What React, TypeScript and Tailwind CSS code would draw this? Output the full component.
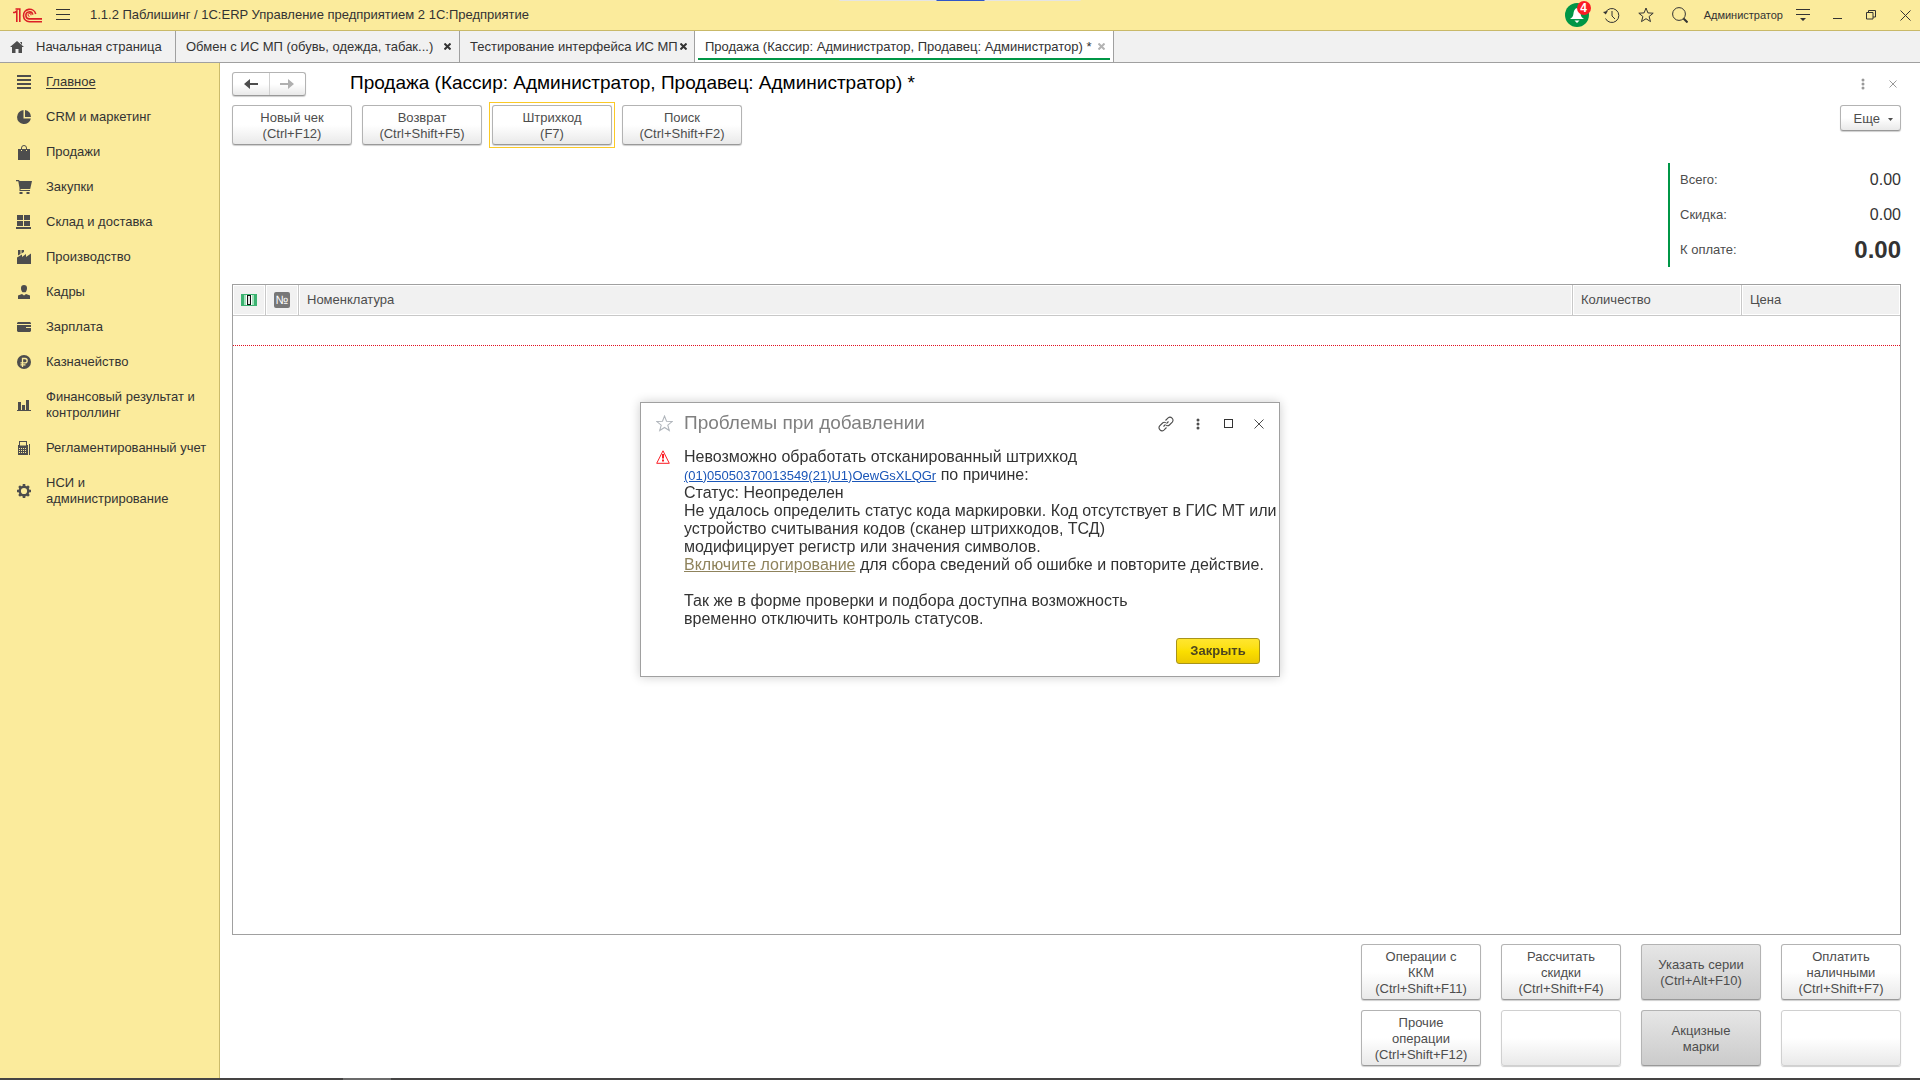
import type { ReactNode } from "react";

type MenuItem = { title: string; icon: ReactNode };

const openTabs = ["Обмен с ИС МП (обувь, одежда, табак...)", "Тестирование интерфейса ИС МП"];

const menu: MenuItem[] = [
  { title: "Главное", icon: <path d="M1 1h14v2H1zM1 5h14v2H1zM1 9h14v2H1zM1 13h14v2H1z" /> },
  {
    title: "CRM и маркетинг",
    icon: <path d="M7.5 1.1A7 7 0 1 0 14.9 9.5H7.5zM9 1v7h6A7 7 0 0 0 9 1z" />,
  },
  {
    title: "Продажи",
    icon: (
      <>
        <path d="M2 5h3v2h1V5h4v2h1V5h3v11H2z" />
        <path d="M5.5 6V4a2.5 2.5 0 0 1 5 0v2" fill="none" stroke="currentColor" />
      </>
    ),
  },
  {
    title: "Закупки",
    icon: <path d="M0 1h3l.6 1H16l-1.8 8H4.5v1H14v1H3.5V9L2.3 2.2H0zM3.5 13h3v2h-3zM10.5 13h3v2h-3z" />,
  },
  { title: "Склад и доставка", icon: <path d="M1 1h6v5H1zM8 1h6v5H8zM1 7h6v5H1zM8 7h6v5H8zM0 13h15v2H0z" /> },
  { title: "Производство", icon: <path d="M1 15V8.5l5-3V8l4-3v3l5-3.5V15zM2 1h2.5v4L2 6.5zM5.5 1H8v2L5.5 4.500z" /> },
  {
    title: "Кадры",
    icon: (
      <>
        <path d="M8 1a3 3 0 0 1 3 3c0 2-.7 3.5-1.5 4.3h-3C5.7 7.5 5 6 5 4a3 3 0 0 1 3-3z" />
        <path d="M2 15v-3.5L6 10l2 1.5L10 10l4 1.5V15z" />
      </>
    ),
  },
  { title: "Зарплата", icon: <path d="M2 3h12l1 1v1H1V4zM1 6h14v2h-5v1h5v3l-1 1H2l-1-1z" /> },
  {
    title: "Казначейство",
    icon: (
      <>
        <circle cx="8" cy="8" r="7" />
        <path d="M6.5 13V4.5H9a2 2 0 0 1 0 4.3H4.5M4.5 10.8h5" fill="none" stroke="#fbeb9c" strokeWidth="1.3" />
      </>
    ),
  },
  { title: "Финансовый результат и контроллинг", icon: <path d="M1 13h14v1H1zM2 5h3v8H2zM6 8h3v5H6zM10 3h3v10h-3z" /> },
  {
    title: "Регламентированный учет",
    icon: (
      <>
        <path
          fillRule="evenodd"
          d="M3 1h8v4h1v10H2V5h1zM4 2v3.5h6V2zM3 8v1h1V8zm2 0v1h1V8zm2 0v1h1V8zm2 0v1h1V8zm-6 2v1h1v-1zm2 0v1h1v-1zm2 0v1h1v-1zm2 0v1h1v-1zm-6 2v1h1v-1zm2 0v1h1v-1zm2 0v1h1v-1zm2 0v1h1v-1z"
        />
        <path d="M13 4h1v11h-1z" />
      </>
    ),
  },
  {
    title: "НСИ и администрирование",
    icon: (
      <>
        <circle cx="8" cy="8" r="4.3" fill="none" stroke="currentColor" strokeWidth="2.4" />
        <path
          d="M8 1v2.5M8 12.5V15M1 8h2.5M12.5 8H15M3.1 3.1l1.7 1.7M11.2 11.2l1.7 1.7M3.1 12.9l1.7-1.7M11.2 4.8l1.7-1.7"
          stroke="currentColor"
          strokeWidth="2.6"
        />
      </>
    ),
  },
];

const totals = [
  { label: "Всего:", value: "0.00", large: false },
  { label: "Скидка:", value: "0.00", large: false },
  { label: "К оплате:", value: "0.00", large: true },
];

const footerButtons = [
  { lines: ["Операции с", "ККМ", "(Ctrl+Shift+F11)"] },
  { lines: ["Рассчитать", "скидки", "(Ctrl+Shift+F4)"] },
  { lines: ["Указать серии", "(Ctrl+Alt+F10)"], dark: true },
  { lines: ["Оплатить", "наличными", "(Ctrl+Shift+F7)"] },
  { lines: ["Прочие", "операции", "(Ctrl+Shift+F12)"] },
  { lines: [] },
  { lines: ["Акцизные", "марки"], dark: true },
  { lines: [] },
];

const buttonBase = "rounded-[3px] border border-[#b3b3b3] border-b-[#999] text-center text-[13px] leading-4 text-[#4d4d4d] shadow-[0_1px_1px_#cfcfcf]";
const lightFill = "bg-linear-to-b from-white from-50% to-[#e9e9e9]";

function Cross({ size, width = 1 }: { size: number; width?: number }) {
  return (
    <svg width={size} height={size} viewBox={`0 0 ${size} ${size}`} stroke="currentColor" strokeWidth={width}>
      <path d={`M.5.5 ${size - 0.5} ${size - 0.5}M${size - 0.5}.5.5 ${size - 0.5}`} />
    </svg>
  );
}

function Dots() {
  return (
    <svg width="4" height="12" viewBox="0 0 4 12" fill="currentColor">
      <circle cx="2" cy="2" r="1.5" />
      <circle cx="2" cy="6" r="1.5" />
      <circle cx="2" cy="10" r="1.5" />
    </svg>
  );
}

function Star({ size }: { size: number }) {
  return (
    <svg width={size} height={size} viewBox="0 0 16 16" fill="none" stroke="currentColor">
      <path d="M8 1l1.9 4.9 5.3.3-4.1 3.3 1.4 5.1L8 11.7l-4.5 2.9 1.4-5.1L.8 6.2l5.3-.3z" />
    </svg>
  );
}

function TitleBar() {
  return (
    <header className="relative flex h-[31px] shrink-0 items-center border-b border-[#c9b968] bg-[#fbeb9c] pr-[9px] pl-[13px] text-[#333]">
      <div className="absolute top-0 left-1/2 flex h-px w-[241px] -translate-x-1/2 justify-center bg-[#e4e4e4]">
        <span className="h-px w-12 bg-[#2f56c8]" />
      </div>
      <svg width="30" height="15" viewBox="0 0 30 15" fill="none" stroke="#dc1f26" strokeWidth="1.6" aria-label="1С">
        <path d="M0 4.5h1.8L3.8 3v11M2.5 1h4.3v13" />
        <path d="M22.7 6A6.2 6.2 0 1 0 16.5 13.7H29M19.8 6.6A3.5 3.5 0 1 0 16.5 10.9H29" />
        <path d="M18 7.3a1.5 1.5 0 1 0-1.5 1.1" strokeWidth="1" />
      </svg>
      <button type="button" aria-label="Меню" className="ml-[13px]">
        <svg width="14" height="12" viewBox="0 0 14 12" fill="#333">
          <path d="M0 0h14v1H0zM0 5h14v1H0zM0 10h14v1H0z" />
        </svg>
      </button>
      <span className="ml-5 text-[13px]">1.1.2 Паблишинг / 1C:ERP Управление предприятием 2 1С:Предприятие</span>
      <div className="ml-auto flex items-center">
        <button type="button" aria-label="Уведомления" className="relative mr-3">
          <svg width="26" height="30" viewBox="0 0 26 30">
            <circle cx="12" cy="15" r="12" fill="#009646" />
            <path d="M12 8c2.5.8 3.3 3 3.6 6 .3 2.5 1.4 3.7 3.4 5H5c2-1.3 3.1-2.5 3.4-5 .3-3 1.1-5.2 3.6-6zM9.5 20.5h5L12 23z" fill="#fff" />
            <circle cx="19" cy="8" r="7" fill="#fb1c24" />
          </svg>
          <span className="absolute top-0 left-3 w-[14px] text-center text-[12px] leading-4 font-bold text-white">4</span>
        </button>
        <button type="button" aria-label="История" className="mr-[18px]">
          <svg width="17" height="17" viewBox="0 0 17 17" fill="none" stroke="currentColor">
            <path d="M2.5 5.5a7 7 0 1 1 0 6M9 4v5l3 3" />
            <path d="M0 5l2.8 2.5L4.8 4z" fill="currentColor" stroke="none" />
          </svg>
        </button>
        <button type="button" aria-label="Избранное" className="mr-[18px]">
          <Star size={16} />
        </button>
        <button type="button" aria-label="Поиск" className="mr-4">
          <svg width="16" height="16" viewBox="0 0 16 16" fill="none" stroke="currentColor">
            <circle cx="7" cy="7" r="6.4" />
            <path d="M11.5 11.5l4 4" strokeWidth="2" />
          </svg>
        </button>
        <button type="button" className="mr-[13px] text-[11px]">Администратор</button>
        <button type="button" aria-label="Настройки" className="mr-[23px]">
          <svg width="14" height="14" viewBox="0 0 14 14" fill="currentColor">
            <path d="M0 1h14v1H0zM0 6h14v1H0zM4 10h6l-3 3z" />
          </svg>
        </button>
        <button type="button" aria-label="Свернуть" className="mr-6 h-2 w-[9px] border-b border-[#333]" />
        <button type="button" aria-label="Восстановить" className="mr-6">
          <svg width="10" height="10" viewBox="0 0 10 10" fill="none" stroke="currentColor">
            <path d="M.5 2.5h6.5v6.5H.5zM2.5 2.5v-2h7v6.500H7" />
          </svg>
        </button>
        <button type="button" aria-label="Закрыть окно">
          <Cross size={11} />
        </button>
      </div>
    </header>
  );
}

function TabBar() {
  return (
    <nav className="flex h-8 shrink-0 border-b border-[#a0a0a0] bg-[#f1f1f1] text-[13px] text-[#333]">
      <a href="#home" className="flex w-44 items-center gap-3 border-r border-[#a0a0a0] pl-[10px] whitespace-nowrap">
        <svg width="14" height="12" viewBox="0 0 14 12" fill="#4d4d4d">
          <path d="M7 0l7 6h-2v6H8.500V8h-3v4H2V6H0zM10 1h2v3z" />
        </svg>
        Начальная страница
      </a>
      {openTabs.map((tab) => (
        <div
          key={tab}
          className="flex items-center justify-between gap-0.5 border-r border-[#a0a0a0] pr-2 pl-[10px] whitespace-nowrap first-of-type:w-[284px] last-of-type:w-[235px]"
        >
          <a href="#tab">{tab}</a>
          <button type="button" aria-label="Закрыть вкладку">
            <Cross size={7} width={2} />
          </button>
        </div>
      ))}
      <section className="flex w-[419px] flex-col border-r border-[#a0a0a0] bg-white px-[3px] pb-0.5 whitespace-nowrap">
        <div className="flex flex-1 items-center justify-between border-b-2 border-[#009646] pt-1 pr-[5px] pl-[7px]">
          <a href="#sale">Продажа (Кассир: Администратор, Продавец: Администратор) *</a>
          <button type="button" aria-label="Закрыть вкладку" className="text-[#b3b3b3]">
            <Cross size={7} width={2} />
          </button>
        </div>
      </section>
    </nav>
  );
}

function Sidebar() {
  return (
    <aside className="w-[220px] shrink-0 border-r border-[#cbbb6b] bg-[#fbeb9c] pt-0.5 text-[13px] leading-4 text-[#333]">
      {menu.map((item, index) => (
        <a key={item.title} href="#section" className="flex items-center gap-[14px] pt-[9px] pr-2 pb-[10px] pl-4">
          <svg width="16" height="16" viewBox="0 0 16 16" fill="currentColor" className="shrink-0 text-[#4d4d4d]">
            {item.icon}
          </svg>
          <span className={index === 0 ? "underline underline-offset-2" : ""}>{item.title}</span>
        </a>
      ))}
    </aside>
  );
}

function CommandButton({ title, keys }: { title: string; keys: string }) {
  return (
    <button type="button" className={`h-10 w-[120px] pt-0.5 ${buttonBase} ${lightFill}`}>
      {title}
      <br />
      {keys}
    </button>
  );
}

function ItemsTable() {
  const cell = "border-r border-b border-[#c8c8c8] font-normal shadow-[inset_0_0_0_1px_#fff] last:border-r-0";
  return (
    <div className="flex-1 border border-[#a0a0a0]">
      <table className="w-full table-fixed border-separate border-spacing-0 text-left text-[13px] text-[#4d4d4d]">
        <thead>
          <tr className="h-[31px] bg-[#f1f1f1]">
            <th className={`w-[33px] ${cell}`}>
              <svg width="16" height="12" viewBox="0 0 16 12" className="mx-auto">
                <path d="M0 0h16v12H0z" fill="#3cb371" />
                <path d="M3 1h10v10H3z" fill="#a6e3bf" />
                <path d="M5 1h6v10H5z" fill="#fff" />
                <path d="M6 1h4v10H6z" fill="#111" />
                <path d="M7 2l2 2-2 2 2 2-2 2M9 2L7 4l2 2-2 2 2 2" fill="none" stroke="#fff" strokeWidth=".9" />
              </svg>
            </th>
            <th className={`w-[33px] ${cell}`}>
              <span className="mx-auto block size-4 rounded-xs bg-[#777] text-center text-[12px] leading-4 text-white">№</span>
            </th>
            <th className={`pl-2 ${cell}`}>Номенклатура</th>
            <th className={`w-[169px] pl-2 ${cell}`}>Количество</th>
            <th className={`w-[158px] pl-2 ${cell}`}>Цена</th>
          </tr>
        </thead>
        <tbody>
          <tr className="h-[30px]">
            <td colSpan={5} className="border-b border-dotted border-[#e01020]" />
          </tr>
        </tbody>
      </table>
    </div>
  );
}

function ProblemDialog() {
  return (
    <div className="fixed inset-0 flex items-center justify-center pb-0.5">
      <div
        role="dialog"
        aria-labelledby="dialog-title"
        className="w-[640px] border border-[#a0a0a0] bg-white px-[15px] pb-3 text-[#333] shadow-[0_0_10px_rgba(0,0,0,0.2)]"
      >
        <div className="flex h-[42px] items-center">
          <span className="mr-[11px] text-[#b0b5bb]">
            <Star size={17} />
          </span>
          <h2 id="dialog-title" className="text-[19px] text-[#808080]">Проблемы при добавлении</h2>
          <div className="ml-auto flex items-center text-[#4d4d4d]">
            <button type="button" aria-label="Получить ссылку" className="mr-[22px]">
              <svg width="16" height="16" viewBox="0 0 16 16" fill="none" stroke="currentColor" strokeWidth="1.1">
                <path d="M7.5 4.5l2.6-2.6a3 3 0 0 1 4.2 4.2l-2.9 2.9c-.9.9-2.2.9-3.200.3" />
                <path d="M8.5 11.5l-2.6 2.6a3 3 0 0 1-4.2-4.2L4.600 7c.9-.9 2.2-.9 3.200-.3" />
                <path d="M5.5 10.5l2-2M8.5 7.5l2-2" />
              </svg>
            </button>
            <button type="button" aria-label="Еще" className="mr-6">
              <Dots />
            </button>
            <button type="button" aria-label="Развернуть" className="mr-[21px] size-[9px] border border-[#333]" />
            <button type="button" aria-label="Закрыть">
              <Cross size={10} />
            </button>
          </div>
        </div>
        <div className="flex gap-[14px] pt-[3px]">
          <svg width="14" height="14" viewBox="0 0 14 14" className="mt-0.5 shrink-0">
            <path d="M7 .8l6.3 12.5H.7z" fill="#fff" stroke="#fb1c24" strokeLinejoin="round" />
            <path d="M6 4h2v4.5H6zM6 9.5h2v2H6z" fill="#fb1c24" />
          </svg>
          <p className="text-[16px] leading-[18px] whitespace-nowrap">
            Невозможно обработать отсканированный штрихкод
            <br />
            <a href="#code" className="text-[13px] leading-none text-[#1a56b8] underline">(01)05050370013549(21)U1)OewGsXLQGr</a> по причине:
            <br />
            Статус: Неопределен
            <br />
            Не удалось определить статус кода маркировки. Код отсутствует в ГИС МТ или
            <br />
            устройство считывания кодов (сканер штрихкодов, ТСД)
            <br />
            модифицирует регистр или значения символов.
            <br />
            <a href="#log" className="text-[#8f835c] underline">Включите логирование</a> для сбора сведений об ошибке и повторите действие.
            <br />
            <br />
            Так же в форме проверки и подбора доступна возможность
            <br />
            временно отключить контроль статусов.
          </p>
        </div>
        <div className="flex justify-end pt-[10px] pr-1">
          <button
            type="button"
            className="h-[26px] w-[84px] rounded-[3px] border border-[#a8941a] bg-linear-to-b from-[#ffe62e] via-[#fbdf00] to-[#ecc900] text-[13px] font-bold text-[#4d4620]"
          >
            Закрыть
          </button>
        </div>
      </div>
    </div>
  );
}

export default function App() {
  return (
    <div className="flex min-h-screen flex-col bg-white font-['Liberation_Sans',Arial,sans-serif]">
      <TitleBar />
      <TabBar />
      <div className="flex flex-1">
        <Sidebar />
        <main className="flex min-w-0 flex-1 flex-col pt-2 pr-[19px] pb-3 pl-3">
          <div className="flex h-[25px] items-center">
            <div className={`flex h-6 w-[74px] ${buttonBase} ${lightFill}`}>
              <button type="button" aria-label="Назад" className="flex flex-1 items-center justify-center border-r border-[#d0d0d0] text-[#4d4d4d]">
                <svg width="14" height="10" viewBox="0 0 14 10" fill="currentColor">
                  <path d="M6 0v4h8v2H6v4L0 5z" />
                </svg>
              </button>
              <button type="button" aria-label="Вперед" className="flex flex-1 items-center justify-center text-[#b0b0b0]">
                <svg width="14" height="10" viewBox="0 0 14 10" fill="currentColor">
                  <path d="M8 0v4H0v2h8v4l6-5z" />
                </svg>
              </button>
            </div>
            <h1 className="ml-11 text-[19px] text-black">Продажа (Кассир: Администратор, Продавец: Администратор) *</h1>
            <div className="ml-auto flex items-center gap-6 pr-1 text-[#999]">
              <button type="button" aria-label="Действия">
                <Dots />
              </button>
              <button type="button" aria-label="Закрыть форму">
                <Cross size={8} />
              </button>
            </div>
          </div>

          <div className="mt-[9px] flex items-start gap-[10px]">
            <CommandButton title="Новый чек" keys="(Ctrl+F12)" />
            <CommandButton title="Возврат" keys="(Ctrl+Shift+F5)" />
            <div className="-m-[3px] flex border border-[#fbc926] p-0.5">
              <CommandButton title="Штрихкод" keys="(F7)" />
            </div>
            <CommandButton title="Поиск" keys="(Ctrl+Shift+F2)" />
            <button type="button" className={`ml-auto flex h-[26px] w-[61px] items-center justify-end gap-2 pt-0.5 pr-[7px] ${buttonBase} ${lightFill}`}>
              Еще
              <svg width="5" height="3" viewBox="0 0 5 3" fill="currentColor">
                <path d="M0 0h5L2.5 3z" />
              </svg>
            </button>
          </div>

          <dl className="mt-[18px] w-[233px] self-end border-l-2 border-[#009646] pl-[10px]">
            {totals.map((row) => (
              <div key={row.label} className="flex h-[35px] items-center justify-between pb-0.5 last:h-[34px] last:pb-0">
                <dt className="text-[13px] text-[#4d4d4d]">{row.label}</dt>
                <dd className={row.large ? "text-[24px] font-bold text-[#333]" : "text-[16px] text-[#333]"}>{row.value}</dd>
              </div>
            ))}
          </dl>

          <div className="mt-[17px] flex flex-1 flex-col">
            <ItemsTable />
          </div>

          <div className="mt-[9px] grid grid-cols-[repeat(4,120px)] justify-end gap-x-5 gap-y-[10px]">
            {footerButtons.map((button, index) => (
              <button
                key={index}
                type="button"
                disabled={button.lines.length === 0}
                className={`h-14 pt-0.5 disabled:border-[#d0d0d0] ${buttonBase} ${button.dark ? "bg-linear-to-b from-[#e6e6e6] to-[#cbcbcb]" : lightFill}`}
              >
                {button.lines.map((line) => (
                  <span key={line} className="block">{line}</span>
                ))}
              </button>
            ))}
          </div>
        </main>
      </div>
      <div className="flex h-0.5 shrink-0 bg-[#454444] pl-[343px]">
        <span className="w-12 bg-[#6b6b6b]" />
      </div>
      <ProblemDialog />
    </div>
  );
}
